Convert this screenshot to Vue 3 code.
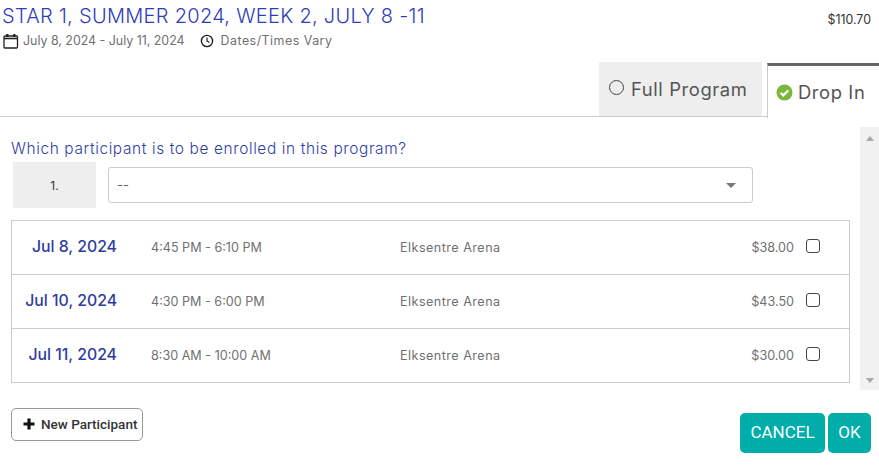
<script setup>
const sessions = [
  { date: 'Jul 8, 2024', time: '4:45 PM - 6:10 PM', place: 'Elksentre Arena', price: '$38.00' },
  { date: 'Jul 10, 2024', time: '4:30 PM - 6:00 PM', place: 'Elksentre Arena', price: '$43.50' },
  { date: 'Jul 11, 2024', time: '8:30 AM - 10:00 AM', place: 'Elksentre Arena', price: '$30.00' }
]
</script>

<template>
  <div class="page">
    <header class="top">
      <div class="heading">
        <h1>STAR 1, SUMMER 2024, WEEK 2, JULY 8 -11</h1>
        <div class="meta">
          <svg class="cal" width="16" height="16" viewBox="0 0 16 16">
            <rect x="1" y="3" width="13.5" height="12" rx="1" fill="none" stroke="#222" stroke-width="1.3" />
            <path d="M1 5.5h13.5" stroke="#222" stroke-width="1.6" />
            <rect x="3" y="1" width="2.6" height="3" rx="1" fill="#222" />
            <rect x="10" y="1" width="2.6" height="3" rx="1" fill="#222" />
          </svg>
          <span class="dates">July 8, 2024 - July 11, 2024</span>
          <svg class="clock" width="14" height="14" viewBox="0 0 14 14">
            <circle cx="7" cy="7" r="5.6" fill="none" stroke="#222" stroke-width="1.4" />
            <path d="M7 3.6V7l2.4 1.6" fill="none" stroke="#222" stroke-width="1.2" />
          </svg>
          <span class="vary">Dates/Times Vary</span>
        </div>
      </div>
      <div class="total">$110.70</div>
    </header>

    <nav class="tabs">
      <div class="tab off">
        <span class="ring"></span>
        <span>Full Program</span>
      </div>
      <div class="tab on">
        <svg width="17" height="17" viewBox="0 0 17 17">
          <circle cx="8.5" cy="8.5" r="8" fill="#7ab83c" />
          <path d="M4.6 8.8l2.7 2.6 5-5" fill="none" stroke="#fff" stroke-width="2.2" />
        </svg>
        <span>Drop In</span>
      </div>
    </nav>

    <div class="body">
      <main class="content">
        <p class="question">Which participant is to be enrolled in this program?</p>
        <div class="pick">
          <div class="num">1.</div>
          <div class="select">
            <span>--</span>
            <i class="caret"></i>
          </div>
        </div>
        <div class="list">
          <div v-for="s in sessions" :key="s.date" class="row">
            <div class="date">{{ s.date }}</div>
            <div class="time">{{ s.time }}</div>
            <div class="place">{{ s.place }}</div>
            <div class="price">{{ s.price }}</div>
            <span class="check"></span>
          </div>
        </div>
      </main>
      <div class="scroll">
        <i class="up"></i>
        <i class="down"></i>
      </div>
    </div>

    <footer class="foot">
      <button class="add">
        <svg width="14" height="14" viewBox="0 0 14 14">
          <path d="M7 1.5v11M1.5 7h11" stroke="#111" stroke-width="3.2" />
        </svg>
        New Participant
      </button>
      <div class="actions">
        <button class="act cancel">CANCEL</button>
        <button class="act ok">OK</button>
      </div>
    </footer>
  </div>
</template>

<style>
html, body {
  background: #fff;
}
</style>

<style scoped>
.page {
  width: 879px;
  height: 470px;
  overflow: hidden;
  font-family: Inter, "Open Sans", sans-serif;
  color: #555;
}
.top {
  display: flex;
  justify-content: space-between;
  height: 62px;
  padding-left: 2px;
  padding-right: 8px;
}
h1 {
  margin: 4px 0 0;
  font-size: 20px;
  line-height: 24px;
  font-weight: 300;
  letter-spacing: 0.3px;
  color: #2f3cb8;
  white-space: nowrap;
}
.meta {
  display: flex;
  align-items: center;
  margin-top: 3px;
  font-size: 12.4px;
  line-height: 20px;
  color: #707070;
}
.cal {
  margin-left: 1px;
  margin-right: 4px;
}
.dates {
  margin-right: 15px;
}
.clock {
  margin-right: 7px;
}
.vary {
  letter-spacing: 0.5px;
}
.total {
  margin-top: 11px;
  font-size: 12.4px;
  line-height: 17px;
  color: #333;
}
.tabs {
  display: flex;
  justify-content: flex-end;
  gap: 5px;
  height: 55px;
  border-bottom: 1px solid #ccc;
  box-sizing: border-box;
}
.tab {
  display: flex;
  align-items: center;
  font-size: 18.4px;
  letter-spacing: 0.6px;
  color: #555;
  box-sizing: border-box;
}
.off {
  width: 163px;
  height: 54px;
  padding-left: 10px;
  padding-bottom: 1px;
  gap: 7px;
  background: #eee;
}
.ring {
  width: 15px;
  height: 15px;
  box-sizing: border-box;
  margin-top: -2px;
  border: 1.5px solid #444;
  border-radius: 50%;
}
.on {
  width: 112px;
  height: 55px;
  margin-top: 1px;
  padding-left: 8px;
  gap: 5px;
  background: #fff;
  border-top: 3px solid #666;
  border-left: 1px solid #ccc;
}
.body {
  display: flex;
  justify-content: space-between;
  height: 263px;
  margin-top: 10px;
}
.content {
  width: 839px;
  margin-left: 11px;
}
.question {
  margin: 12px 0 0;
  font-size: 15.4px;
  line-height: 19px;
  font-weight: 300;
  letter-spacing: 0.64px;
  color: #2f3ca8;
  white-space: nowrap;
}
.pick {
  display: flex;
  align-items: center;
  gap: 12px;
  margin-left: 2px;
  margin-top: 4px;
}
.num {
  width: 83px;
  height: 46px;
  display: flex;
  align-items: center;
  justify-content: center;
  background: #eee;
  font-size: 12px;
  color: #333;
}
.select {
  width: 645px;
  height: 36px;
  box-sizing: border-box;
  display: flex;
  align-items: center;
  justify-content: space-between;
  padding: 0 16px 0 8px;
  border: 1px solid #ccc;
  border-radius: 3px;
  font-size: 13px;
  color: #666;
}
.caret {
  border: 5.5px solid transparent;
  border-top: 5px solid #777;
  border-bottom: 0;
}
.list {
  margin-top: 12px;
  border: 1px solid #ccc;
}
.row {
  display: flex;
  align-items: center;
  height: 53px;
  box-sizing: border-box;
  font-size: 12.6px;
  color: #707070;
}
.row + .row {
  height: 54px;
  border-top: 1px solid #ccc;
}
.date {
  width: 105px;
  flex: none;
  padding-bottom: 3px;
  text-align: right;
  font-size: 15.8px;
  font-weight: 500;
  color: #2f3ca0;
  white-space: nowrap;
}
.time {
  width: 249px;
  flex: none;
  margin-left: 34px;
  white-space: nowrap;
}
.place {
  width: 300px;
  flex: none;
  letter-spacing: 0.47px;
  white-space: nowrap;
}
.price {
  width: 94px;
  flex: none;
  text-align: right;
}
.check {
  width: 14px;
  height: 14px;
  box-sizing: border-box;
  margin-left: 12px;
  margin-bottom: 3px;
  border: 1.5px solid #444;
  border-radius: 3px;
}
.scroll {
  width: 19px;
  background: #f1f1f1;
  display: flex;
  flex-direction: column;
  justify-content: space-between;
  align-items: center;
  padding: 9px 0 7px;
  box-sizing: border-box;
}
.up {
  border: 4.5px solid transparent;
  border-bottom: 5px solid #a8a8a8;
  border-top: 0;
}
.down {
  border: 4.5px solid transparent;
  border-top: 5px solid #a8a8a8;
  border-bottom: 0;
}
.foot {
  display: flex;
  justify-content: space-between;
  align-items: flex-start;
  margin-top: 18px;
  padding: 0 8px 0 11px;
}
.add {
  display: flex;
  align-items: center;
  gap: 5px;
  width: 132px;
  height: 33px;
  padding: 0 0 2px 10px;
  background: #fff;
  border: 1px solid #999;
  border-radius: 5px;
  font-family: Roboto, sans-serif;
  font-size: 13.5px;
  font-weight: 500;
  color: #333;
  white-space: nowrap;
}
.actions {
  display: flex;
  gap: 3px;
  margin-top: 5px;
}
.act {
  height: 40px;
  padding: 0 0 2px;
  border: 0;
  border-radius: 5px;
  background: #00ada9;
  color: #fff;
  font-family: Roboto, sans-serif;
  font-size: 17px;
}
.cancel {
  width: 85px;
}
.ok {
  width: 43px;
}
</style>
